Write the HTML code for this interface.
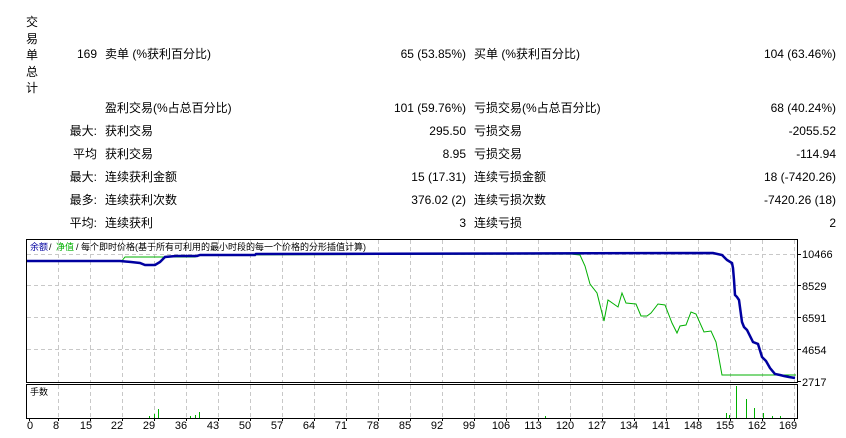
<!DOCTYPE html>
<html><head><meta charset="utf-8"><style>
body{margin:0;width:846px;height:438px;background:#fff;position:relative;overflow:hidden;font-family:"Liberation Sans","Noto Sans CJK SC",sans-serif;font-size:12px;color:#000}
.t{position:absolute;white-space:nowrap;line-height:14px}
.r{text-align:right}
</style></head><body>
<div class="t" style="left:26px;top:14px;width:14px;line-height:16.5px;font-size:12px">交<br>易<br>单<br>总<br>计</div>

<div class="t r" style="right:749px;top:47px">169</div>
<div class="t" style="left:105px;top:47px">卖单 (%获利百分比)</div>
<div class="t r" style="right:380px;top:47px">65 (53.85%)</div>
<div class="t" style="left:474px;top:47px">买单 (%获利百分比)</div>
<div class="t r" style="right:10px;top:47px">104 (63.46%)</div>

<div class="t" style="left:105px;top:101px">盈利交易(%占总百分比)</div>
<div class="t r" style="right:380px;top:101px">101 (59.76%)</div>
<div class="t" style="left:474px;top:101px">亏损交易(%占总百分比)</div>
<div class="t r" style="right:10px;top:101px">68 (40.24%)</div>

<div class="t r" style="right:749px;top:124px">最大:</div>
<div class="t" style="left:105px;top:124px">获利交易</div>
<div class="t r" style="right:380px;top:124px">295.50</div>
<div class="t" style="left:474px;top:124px">亏损交易</div>
<div class="t r" style="right:10px;top:124px">-2055.52</div>

<div class="t r" style="right:749px;top:147px">平均</div>
<div class="t" style="left:105px;top:147px">获利交易</div>
<div class="t r" style="right:380px;top:147px">8.95</div>
<div class="t" style="left:474px;top:147px">亏损交易</div>
<div class="t r" style="right:10px;top:147px">-114.94</div>

<div class="t r" style="right:749px;top:170px">最大:</div>
<div class="t" style="left:105px;top:170px">连续获利金额</div>
<div class="t r" style="right:380px;top:170px">15 (17.31)</div>
<div class="t" style="left:474px;top:170px">连续亏损金额</div>
<div class="t r" style="right:10px;top:170px">18 (-7420.26)</div>

<div class="t r" style="right:749px;top:193px">最多:</div>
<div class="t" style="left:105px;top:193px">连续获利次数</div>
<div class="t r" style="right:380px;top:193px">376.02 (2)</div>
<div class="t" style="left:474px;top:193px">连续亏损次数</div>
<div class="t r" style="right:10px;top:193px">-7420.26 (18)</div>

<div class="t r" style="right:749px;top:216px">平均:</div>
<div class="t" style="left:105px;top:216px">连续获利</div>
<div class="t r" style="right:380px;top:216px">3</div>
<div class="t" style="left:474px;top:216px">连续亏损</div>
<div class="t r" style="right:10px;top:216px">2</div>

<svg width="846" height="438" style="position:absolute;left:0;top:0" xmlns="http://www.w3.org/2000/svg">
<g stroke="#c8c8c8" stroke-dasharray="4,3" stroke-width="1">
<path d="M58.5 240V382M90.5 240V382M122.5 240V382M154.5 240V382M186.5 240V382M218.5 240V382M250.5 240V382M282.5 240V382M314.5 240V382M346.5 240V382M378.5 240V382M410.5 240V382M442.5 240V382M474.5 240V382M506.5 240V382M538.5 240V382M570.5 240V382M602.5 240V382M634.5 240V382M666.5 240V382M698.5 240V382M730.5 240V382M762.5 240V382M794.5 240V382"/>
<path d="M58.5 385V418M90.5 385V418M122.5 385V418M154.5 385V418M186.5 385V418M218.5 385V418M250.5 385V418M282.5 385V418M314.5 385V418M346.5 385V418M378.5 385V418M410.5 385V418M442.5 385V418M474.5 385V418M506.5 385V418M538.5 385V418M570.5 385V418M602.5 385V418M634.5 385V418M666.5 385V418M698.5 385V418M730.5 385V418M762.5 385V418M794.5 385V418"/>
<path d="M27 254.5H797M27 285.5H797M27 317.5H797M27 349.5H797"/>
</g>
<rect x="26.5" y="239.5" width="771" height="143" fill="none" stroke="#000"/>
<rect x="26.5" y="384.5" width="771" height="34" fill="none" stroke="#000"/>
<g stroke="#000"><path d="M797 254.5h4M797 285.5h4M797 317.5h4M797 349.5h4M797 381.5h4"/>
<path d="M29.5 418v3M58.5 418v3M90.5 418v3M122.5 418v3M154.5 418v3M186.5 418v3M218.5 418v3M250.5 418v3M282.5 418v3M314.5 418v3M346.5 418v3M378.5 418v3M410.5 418v3M442.5 418v3M474.5 418v3M506.5 418v3M538.5 418v3M570.5 418v3M602.5 418v3M634.5 418v3M666.5 418v3M698.5 418v3M730.5 418v3M762.5 418v3M794.5 418v3"/></g>
<polyline fill="none" stroke="#00b000" stroke-width="1" points="121,262 125,257 195,257 200,255 570,254 580,255 585,266 590,284 597,293 604,321 608,300 618,307 622,293 626,303 636,304 641,316 647,316 651,313 658,304 665,305 672,323 677,333 680,326 686,325 691,312 696,314 704,332 711,331 716,342 722,375 796,375"/>
<polyline fill="none" stroke="#0000a0" stroke-width="2.5" points="27,261 120,261 131,262 140,263 145,265 155,265 160,262 165,257 176,256 190,256 197,256 200,255 255,255 256,254 713,253 722,255 727,260 732,263 733,268 734,280 735,295 737,297 739,300 742,322 744,327 747,330 753,342 758,344 762,357 766,361 770,368 775,374 780,375 784,376 789,377 795,378"/>
<g stroke="#00b000" stroke-width="1"><path d="M149.5 418v-2M154.5 418v-4M158.5 418v-9M190.5 418v-2M195.5 418v-3M199.5 418v-6M726.5 418v-5M729.5 418v-3M736.5 418v-32M746.5 418v-19M754.5 418v-10M763.5 418v-5M772.5 418v-2M780.5 418v-2M545.5 418v-2"/></g>
<g font-family="Liberation Sans, Noto Sans CJK SC, sans-serif" font-size="9">
<text x="30" y="250" fill="#0000a0">余额</text><text x="49" y="250">/</text><text x="56" y="250" fill="#00b000">净值</text><text x="76" y="250">/ 每个即时价格(基于所有可利用的最小时段的每一个价格的分形插值计算)</text>
<text x="30" y="395">手数</text>
</g>
<g font-family="Liberation Sans, sans-serif" font-size="11" text-anchor="middle">
<text x="30" y="429">0</text><text x="56" y="429">8</text><text x="86" y="429">15</text><text x="117" y="429">22</text><text x="149" y="429">29</text><text x="181" y="429">36</text><text x="213" y="429">43</text><text x="245" y="429">50</text><text x="277" y="429">57</text><text x="309" y="429">64</text><text x="341" y="429">71</text><text x="373" y="429">78</text><text x="405" y="429">85</text><text x="437" y="429">92</text><text x="469" y="429">99</text><text x="501" y="429">106</text><text x="533" y="429">113</text><text x="565" y="429">120</text><text x="597" y="429">127</text><text x="629" y="429">134</text><text x="661" y="429">141</text><text x="693" y="429">148</text><text x="725" y="429">155</text><text x="757" y="429">162</text><text x="788" y="429">169</text>
</g>
<g font-family="Liberation Sans, sans-serif" font-size="11">
<text x="802" y="258">10466</text><text x="802" y="290">8529</text><text x="802" y="322">6591</text><text x="802" y="354">4654</text><text x="802" y="386">2717</text>
</g>
</svg>
</body></html>
